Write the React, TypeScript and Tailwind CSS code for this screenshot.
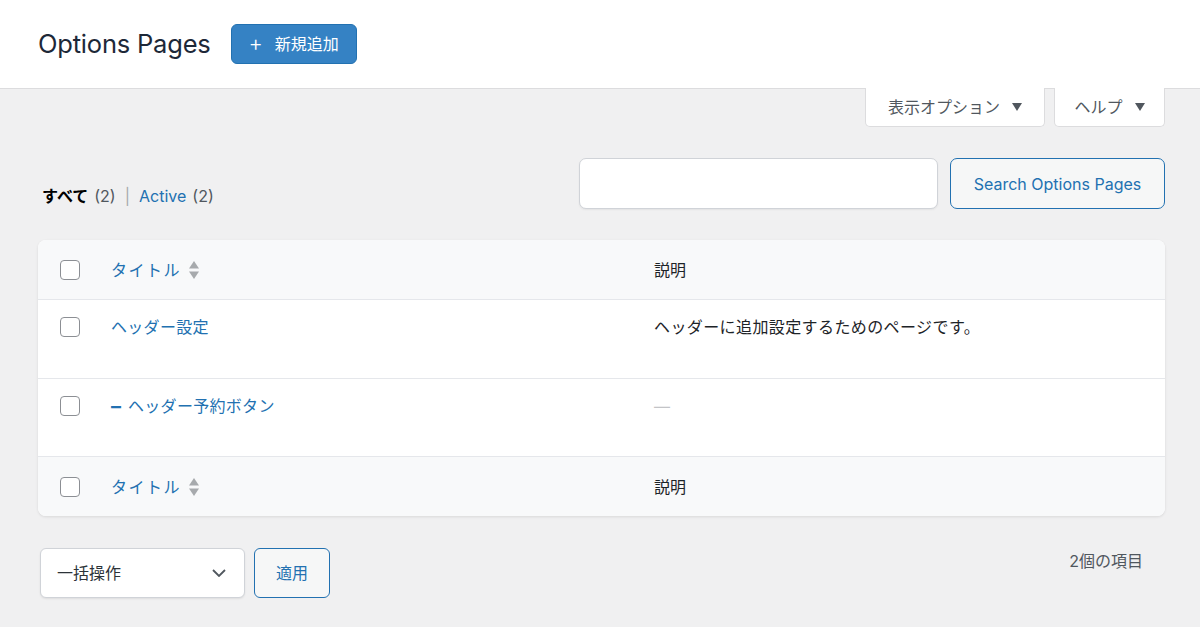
import React from 'react';

const font = { fontFamily: 'Inter, "Noto Sans CJK JP", "Noto Sans", sans-serif' };

// Sort indicator: stacked up and down triangles
function SortIcon() {
  return (
    <svg width="12" height="20" viewBox="0 0 12 20" className="ml-[7px] shrink-0">
      <path d="M6 1 L11 8.5 L1 8.5 Z" fill="#a7aaad" />
      <path d="M6 19 L11 11.5 L1 11.5 Z" fill="#a7aaad" />
    </svg>
  );
}

function Checkbox() {
  return <span className="block w-5 h-5 rounded-[4px] border-[1.5px] border-[#8c8f94] bg-white" />;
}

function Caret() {
  return (
    <svg width="10" height="8" viewBox="0 0 10 8" className="ml-3">
      <path d="M0 0 L10 0 L5 8 Z" fill="#50575e" />
    </svg>
  );
}

const rows = [
  { title: 'ヘッダー設定', child: false, desc: 'ヘッダーに追加設定するためのページです。' },
  { title: 'ヘッダー予約ボタン', child: true, desc: null },
];

function HeadRow({ top }: { top?: boolean }) {
  return (
    <div
      className={
        'flex h-[60px] items-center bg-[#f8f9fa] ' +
        (top ? 'border-b border-[#e5e7eb]' : 'border-t border-[#e5e7eb]')
      }
    >
      <div className="w-[73px] pl-[22px] shrink-0">
        <Checkbox />
      </div>
      <div className="w-[543px] shrink-0 flex items-center text-[16px] tracking-[1.5px] text-[#2271b1]">
        タイトル
        <SortIcon />
      </div>
      <div className="text-[16px] text-[#1d2327]">説明</div>
    </div>
  );
}

export default function App() {
  return (
    <div className="min-h-[627px] bg-[#f0f0f1]" style={font}>
      <header className="h-[89px] bg-white border-b border-[#dcdcde] flex items-center pl-[38px] gap-5">
        <h1 className="text-[25.5px] text-[#1d2838] font-normal tracking-[-0.2px]">Options Pages</h1>
        <button className="h-[40px] w-[126px] rounded-[6px] bg-[#3582c4] border border-[#2271b1] text-white text-[16px] flex items-center justify-center gap-3">
          <span className="text-[22px] leading-none font-light -mt-[2px]">+</span>
          新規追加
        </button>
      </header>

      <div className="flex justify-end gap-[9px] pr-[35px] -mt-px">
        <button className="h-[39px] w-[180px] bg-white border border-[#dcdcde] border-t-0 rounded-b-[5px] flex items-center justify-center text-[16px] text-[#50575e]">
          表示オプション
          <Caret />
        </button>
        <button className="h-[39px] w-[111px] bg-white border border-[#dcdcde] border-t-0 rounded-b-[5px] flex items-center justify-center text-[16px] text-[#50575e]">
          ヘルプ
          <Caret />
        </button>
      </div>

      <div className="pl-[38px] pr-[35px]">
        <div className="mt-[31px] flex items-end justify-between">
          <div className="pl-[4px] pb-[1px] text-[16px] flex items-center gap-[6px] text-[#50575e]">
            <span className="font-bold text-black">すべて</span>
            <span>(2)</span>
            <span className="text-[#a7aaad] mx-[3px]">|</span>
            <span className="text-[#2271b1]">Active</span>
            <span>(2)</span>
          </div>
          <div className="flex gap-3">
            <input className="w-[359px] h-[51px] bg-white border border-[#d0d3d8] rounded-[7px] shadow-[0_1px_2px_rgba(0,0,0,0.06)] outline-none" />
            <button className="w-[215px] h-[51px] rounded-[7px] border-[1.5px] border-[#2271b1] bg-[#f6f7f7] text-[#2271b1] text-[16px]">
              Search Options Pages
            </button>
          </div>
        </div>

        <div className="mt-[31px] bg-white rounded-[8px] overflow-hidden shadow-[0_1px_3px_rgba(0,0,0,0.1)]">
          <HeadRow top />
          {rows.map((r, i) => (
            <div key={i} className={'flex h-[78px] pt-[16px] ' + (i > 0 ? 'border-t border-[#e5e7eb]' : '')}>
              <div className="w-[73px] pl-[22px] pt-[1px] shrink-0">
                <Checkbox />
              </div>
              <div className="w-[543px] shrink-0 flex items-center h-[22px] text-[16px] text-[#2271b1] leading-[22px] tracking-[0.3px]">
                {r.child && <span className="font-bold text-[20px] leading-none mr-[7px] tracking-normal">–</span>}
                {r.title}
              </div>
              {r.desc ? (
                <div className="text-[16px] text-[#1d2327] leading-[22px] tracking-[0.4px]">{r.desc}</div>
              ) : (
                <div className="text-[16px] text-[#c3c4c7] leading-[22px]">—</div>
              )}
            </div>
          ))}
          <HeadRow />
        </div>

        <div className="mt-[32px] flex items-start justify-between">
          <div className="flex gap-[9px] pl-[2px]">
            <div className="w-[205px] h-[50px] bg-white border border-[#d0d3d8] rounded-[6px] shadow-[0_1px_2px_rgba(0,0,0,0.08)] flex items-center justify-between pl-[16px] pr-[18px] text-[16px] text-[#2c3338]">
              一括操作
              <svg width="14" height="8" viewBox="0 0 14 8">
                <path d="M1 1 L7 7 L13 1" fill="none" stroke="#50575e" strokeWidth="1.8" />
              </svg>
            </div>
            <button className="w-[76px] h-[50px] rounded-[6px] border-[1.5px] border-[#2271b1] bg-[#f6f7f7] text-[#2271b1] text-[16px]">
              適用
            </button>
          </div>
          <div className="pt-[1px] pr-[22px] text-[16px] text-[#50575e]">2個の項目</div>
        </div>
      </div>
    </div>
  );
}
